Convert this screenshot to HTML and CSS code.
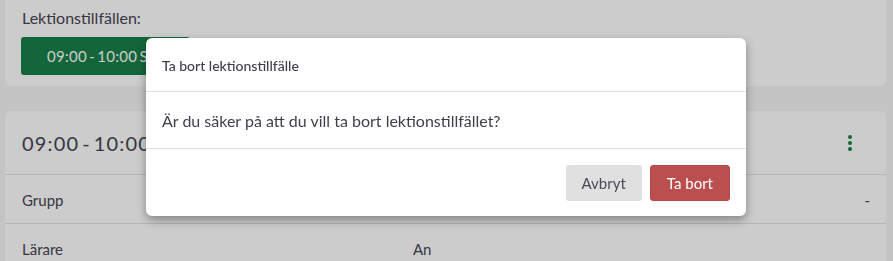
FILE: index.html
```html
<!DOCTYPE html>
<html lang="sv">
<head>
<meta charset="utf-8">
<title>Lektionstillfällen</title>
<link rel="stylesheet" href="styles.css">
</head>
<body>
<main class="page">
  <section class="card card-top">
    <div class="label">Lektionstillfällen:</div>
    <button class="occasion">09:00 - 10:00 Sal 1</button>
  </section>
  <section class="card card-detail">
    <div class="detail-head">
      <h2 class="detail-title">09:00 - 10:00</h2>
      <span class="kebab" aria-label="Meny"><i></i><i></i><i></i></span>
    </div>
    <div class="row">
      <span class="row-label">Grupp</span>
      <span class="row-value end">-</span>
    </div>
    <div class="row">
      <span class="row-label">Lärare</span>
      <span class="row-value">An</span>
    </div>
  </section>
</main>
<div class="overlay"></div>
<div class="modal" role="dialog">
  <div class="modal-head">Ta bort lektionstillfälle</div>
  <div class="modal-body">Är du säker på att du vill ta bort lektionstillfället?</div>
  <div class="modal-foot">
    <button class="btn btn-cancel">Avbryt</button>
    <button class="btn btn-delete">Ta bort</button>
  </div>
</div>
</body>
</html>
```
FILE: styles.css
```css
* { box-sizing: border-box; }
html, body { margin: 0; padding: 0; }
body {
  background: #f5f5f5;
  font-family: Lato, "Open Sans", sans-serif;
  color: #454553;
  height: 261px;
  overflow: hidden;
}
.page {
  padding: 0 7px 0 5px;
  display: flex;
  flex-direction: column;
  gap: 25px;
}
.card {
  background: #ffffff;
  border-radius: 6px;
}
.card-top {
  border-radius: 0 0 6px 6px;
  padding: 8px 16px 11px 16px;
  display: flex;
  flex-direction: column;
  align-items: flex-start;
  gap: 9px;
}
.label {
  font-size: 16px;
  line-height: 20px;
  padding-left: 1px;
}
.occasion {
  width: 169px;
  height: 38px;
  border: 0;
  border-radius: 3px;
  background: #188048;
  color: #ffffff;
  font-family: inherit;
  font-size: 15px;
  letter-spacing: 0.3px;
  word-spacing: -2px;
  text-align: left;
  padding: 0 0 0 26px;
  white-space: nowrap;
  overflow: hidden;
}
.detail-head {
  height: 64px;
  display: flex;
  align-items: center;
  justify-content: space-between;
  padding: 0 34px 0 17px;
  border-bottom: 1px solid #e4e4e4;
}
.detail-title {
  margin: 0;
  font-size: 20px;
  font-weight: 400;
  letter-spacing: 1.2px;
  word-spacing: -3.5px;
}
.kebab {
  display: flex;
  flex-direction: column;
  gap: 2px;
}
.kebab i {
  width: 4px;
  height: 4px;
  border-radius: 50%;
  background: #188048;
}
.row {
  display: grid;
  grid-template-columns: 391px 1fr;
  align-items: center;
  height: 49px;
  padding: 2px 16px 0 17px;
  border-bottom: 1px solid #e4e4e4;
  font-size: 15px;
}
.end { justify-self: end; }
.overlay {
  position: fixed;
  inset: 0;
  background: rgba(0, 0, 0, 0.2);
}
.modal {
  position: absolute;
  left: 146px;
  top: 38px;
  width: 600px;
  background: #ffffff;
  border-radius: 6px;
  box-shadow: 0 4px 10px rgba(0, 0, 0, 0.35);
  color: #3f3f4c;
}
.modal-head {
  height: 54px;
  display: flex;
  align-items: center;
  padding: 1px 16px 0;
  font-size: 14px;
  font-weight: 500;
  border-bottom: 1px solid #e0e0e0;
}
.modal-body {
  height: 57px;
  display: flex;
  align-items: center;
  padding: 0 16px;
  font-size: 16px;
  border-bottom: 1px solid #e0e0e0;
}
.modal-foot {
  display: flex;
  justify-content: flex-end;
  gap: 8px;
  padding: 16px 16px 15px;
}
.btn {
  height: 36px;
  border: 0;
  border-radius: 3px;
  font-family: inherit;
  font-size: 15px;
  padding: 0 16px;
}
.btn-cancel {
  background: #e0e0e0;
  color: #4a4a58;
}
.btn-delete {
  background: #bb4e4e;
  color: #ffffff;
  border: 1px solid #b84848;
}
```
